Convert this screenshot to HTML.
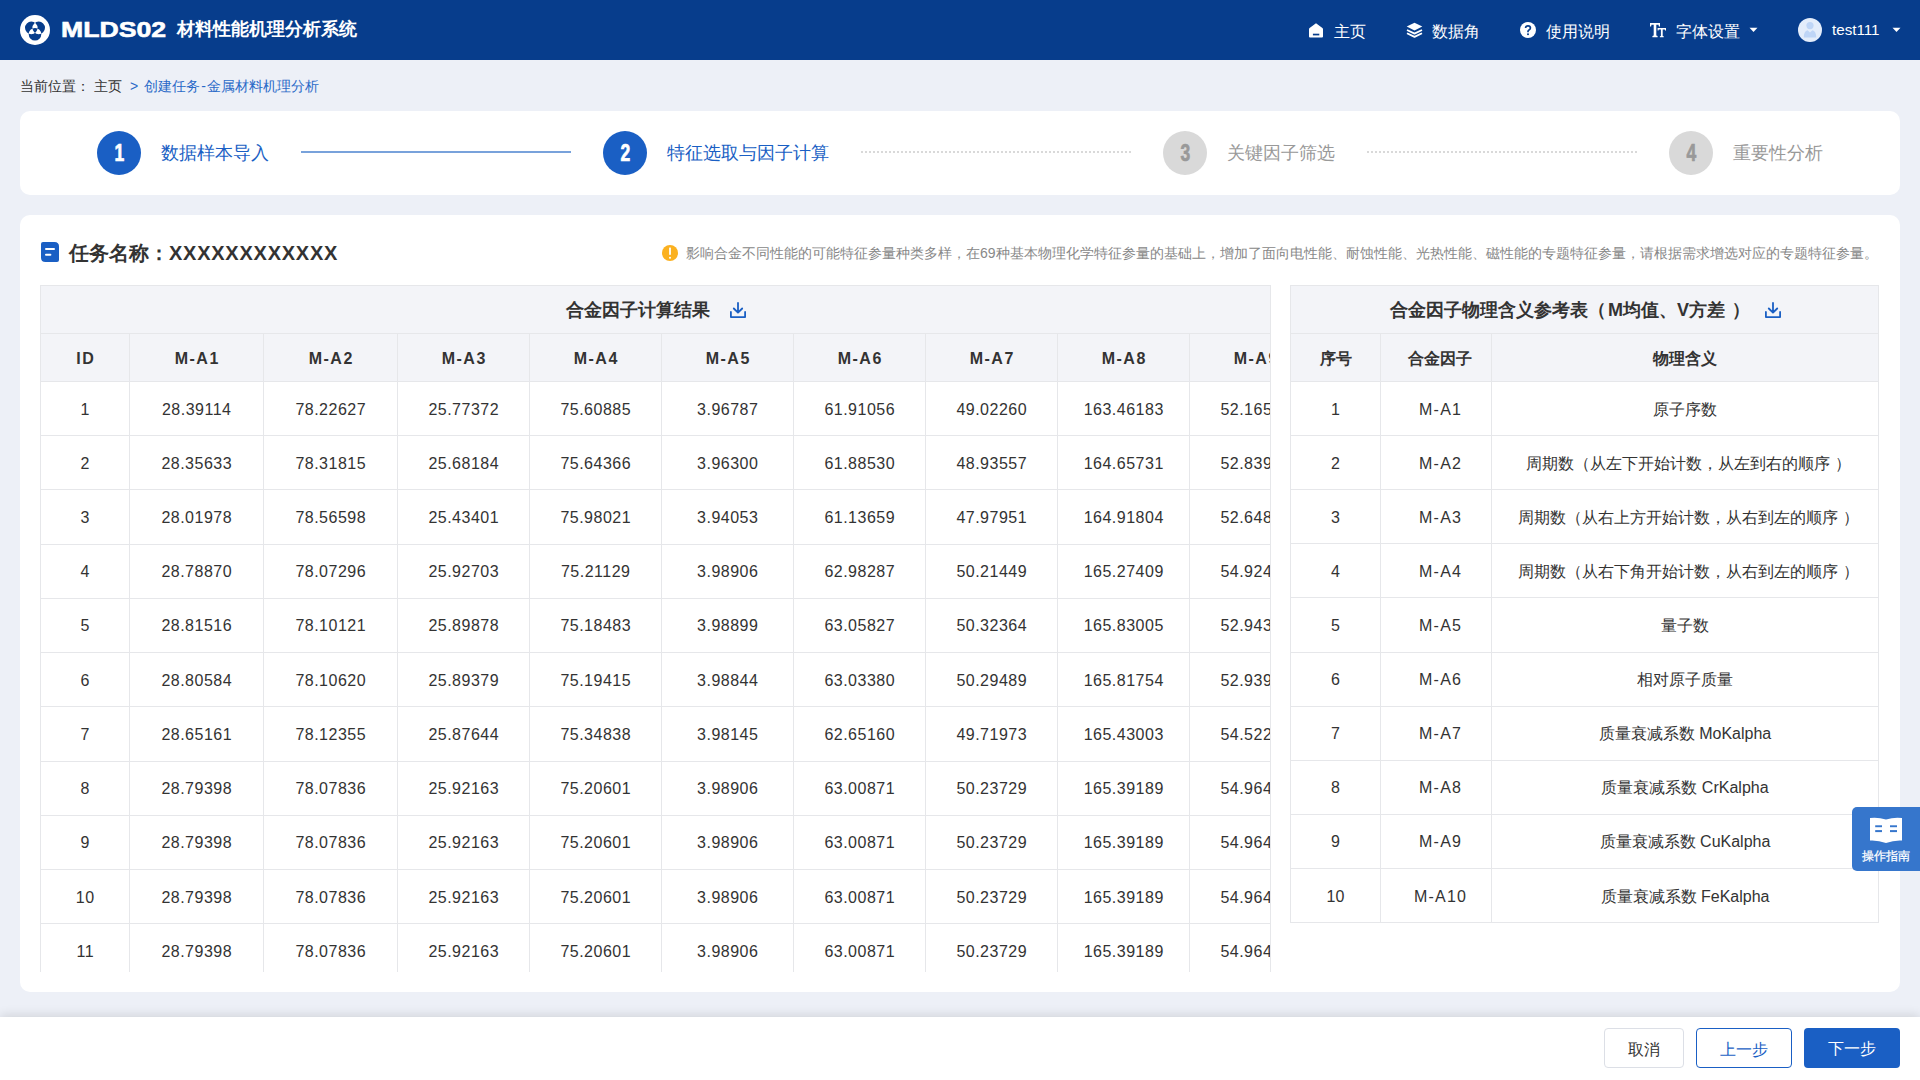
<!DOCTYPE html>
<html><head><meta charset="utf-8">
<style>
*{box-sizing:border-box;margin:0;padding:0}
html,body{width:1920px;height:1080px;overflow:hidden}
body{font-family:"Liberation Sans",sans-serif;background:#edf0f7;position:relative;color:#333}
.abs{position:absolute}
#hdr{left:0;top:0;width:1920px;height:60px;background:#073d8c}
.brand1{left:61px;top:16px;font-size:22px;line-height:28px;font-weight:bold;color:#fff;transform:scaleX(1.21);transform-origin:0 0;-webkit-text-stroke:0.6px #fff}
.brand2{left:177px;top:17px;font-size:18px;font-weight:bold;color:#fff}
.nav{top:21px;font-size:16px;color:#fff;line-height:22px;white-space:nowrap}
.crumb{top:76px;font-size:14px;line-height:20px;color:#333;white-space:nowrap}
.crumb.lnk{color:#2a6ac8}
.card{background:#fff;border-radius:10px}
.step-c{width:44px;height:44px;border-radius:50%;top:131px;color:#fff;font-size:23px;font-weight:bold;text-align:center;line-height:44px}
.step-c span{display:inline-block;transform:scaleX(0.76);-webkit-text-stroke:0.7px currentColor}
.step-t{top:140px;font-size:18px;line-height:26px;white-space:nowrap}
table{border-collapse:collapse;table-layout:fixed}
td,th{border:1px solid #e6e7ea;text-align:center;font-size:16px;line-height:22px;color:#333;white-space:nowrap;overflow:hidden;padding:2px 0 0 0}
th{background:#f3f4f8;font-weight:bold;height:48px}
#ltab th{letter-spacing:1.5px;text-indent:1.5px}
#ltab td{letter-spacing:0.5px;text-indent:0.5px}
#rtab td.m{letter-spacing:1.2px;text-indent:1.2px;padding-left:8px}
#rtab td{height:54.12px}
td{height:54.23px;font-weight:normal}
.ttl{background:#f3f4f8;border:1px solid #e6e7ea;border-bottom:none;display:flex;justify-content:center;align-items:center;font-size:18px;font-weight:bold;color:#333;padding-top:1px}
.ttl .tt{line-height:24px}
.btn{top:1028px;height:40px;border-radius:4px;font-size:16px;text-align:center;line-height:22px;padding-top:10px}
</style></head><body>
<div id="hdr" class="abs">
  <svg class="abs" style="left:20px;top:15px" width="30" height="30" viewBox="0 0 30 30">
    <circle cx="15" cy="15" r="15" fill="#fff"/>
    <path fill="#073d8c" fill-rule="evenodd" d="M5 12.85a6.3 6.3 0 1 0 12.6 0a6.3 6.3 0 1 0 -12.6 0Z M12.4 12.85a6.3 6.3 0 1 0 12.6 0a6.3 6.3 0 1 0 -12.6 0Z M8.7 19.3a6.3 6.3 0 1 0 12.6 0a6.3 6.3 0 1 0 -12.6 0Z"/>
  </svg>
  <div class="abs brand1">MLDS02</div>
  <div class="abs brand2">材料性能机理分析系统</div>
  <svg class="abs" style="left:1309px;top:23px" width="14" height="15" viewBox="0 0 14 15">
    <path fill="#fff" d="M7 0.3 L13.4 5 Q14 5.4 14 6.2 L14 13.6 Q14 14.6 13 14.6 L1 14.6 Q0 14.6 0 13.6 L0 6.2 Q0 5.4 0.6 5 Z"/>
    <rect x="3.9" y="10.7" width="6.4" height="1.7" fill="#073d8c"/>
  </svg>
  <div class="abs nav" style="left:1334px">主页</div>
  <svg class="abs" style="left:1406px;top:22px" width="17" height="16" viewBox="0 0 17 16">
    <path fill="#fff" d="M8.5 0.8 L16.3 4.6 L8.5 8.4 L0.7 4.6 Z"/>
    <path fill="none" stroke="#fff" stroke-width="1.8" stroke-linejoin="round" d="M1 8 L8.5 11.6 L16 8 M1 11.3 L8.5 14.9 L16 11.3"/>
  </svg>
  <div class="abs nav" style="left:1432px">数据角</div>
  <svg class="abs" style="left:1520px;top:22px" width="16" height="16" viewBox="0 0 16 16">
    <circle cx="8" cy="8" r="8" fill="#fff"/>
    <path fill="none" stroke="#073d8c" stroke-width="1.7" d="M5.6 6.1 Q5.6 3.8 8 3.8 Q10.4 3.8 10.4 5.9 Q10.4 7.2 9 7.9 Q8 8.4 8 9.6 L8 10.2"/>
    <rect x="7.1" y="11.4" width="1.8" height="1.7" fill="#073d8c"/>
  </svg>
  <div class="abs nav" style="left:1546px">使用说明</div>
  <svg class="abs" style="left:1650px;top:23px" width="17" height="15" viewBox="0 0 17 15">
    <path fill="#fff" d="M0 0 L10 0 L10 3.6 L8.9 3.6 L8.5 1.8 L6.3 1.8 L6.3 12.6 L7.6 13.1 L7.6 14.2 L2.4 14.2 L2.4 13.1 L3.7 12.6 L3.7 1.8 L1.5 1.8 L1.1 3.6 L0 3.6 Z"/>
    <path fill="#fff" d="M7.6 5 L16 5 L16 7.6 L15.1 7.6 L14.8 6.4 L12.7 6.4 L12.7 12.9 L13.7 13.3 L13.7 14.2 L9.9 14.2 L9.9 13.3 L10.9 12.9 L10.9 6.4 L8.8 6.4 L8.5 7.6 L7.6 7.6 Z"/>
  </svg>
  <div class="abs nav" style="left:1676px">字体设置</div>
  <svg class="abs" style="left:1749px;top:27px" width="9" height="6" viewBox="0 0 9 6"><path fill="#fff" d="M0.5 0.8 L8.5 0.8 L4.5 5 Z"/></svg>
  <svg class="abs" style="left:1798px;top:18px" width="24" height="24" viewBox="0 0 24 24">
    <circle cx="12" cy="12" r="12" fill="#e3edfb"/>
    <circle cx="12" cy="7.6" r="3.6" fill="#bed5f6"/>
    <path fill="#bed5f6" d="M5.8 19.6 Q5.8 13 9.6 12.2 L12 14.6 L14.4 12.2 Q18.2 13 18.2 19.6 Z"/>
  </svg>
  <div class="abs nav" style="left:1832px;top:19px;font-size:15.2px">test111</div>
  <svg class="abs" style="left:1892px;top:27px" width="9" height="6" viewBox="0 0 9 6"><path fill="#fff" d="M0.5 0.8 L8.5 0.8 L4.5 5 Z"/></svg>
</div>
<div class="abs crumb" style="left:20px">当前位置： 主页</div><div class="abs crumb lnk" style="left:130px">&gt;</div><div class="abs crumb lnk" style="left:144px">创建任务<span style="margin:0 1.3px">-</span>金属材料机理分析</div>

<div class="abs card" style="left:20px;top:111px;width:1880px;height:84px"></div>
<div class="abs step-c" style="left:97px;background:#1a5fc4"><span>1</span></div>
<div class="abs step-t" style="left:161px;color:#1a5fc4">数据样本导入</div>
<div class="abs" style="left:301px;top:151px;width:270px;height:2px;background:#78a2db"></div>
<div class="abs step-c" style="left:603px;background:#1a5fc4"><span>2</span></div>
<div class="abs step-t" style="left:667px;color:#1a5fc4">特征选取与因子计算</div>
<div class="abs" style="left:861px;top:151px;width:270px;height:0;border-top:2px dotted #d9d9d9"></div>
<div class="abs step-c" style="left:1163px;background:#d9d9d9;color:#999"><span>3</span></div>
<div class="abs step-t" style="left:1227px;color:#999">关键因子筛选</div>
<div class="abs" style="left:1367px;top:151px;width:270px;height:0;border-top:2px dotted #d9d9d9"></div>
<div class="abs step-c" style="left:1669px;background:#d9d9d9;color:#999"><span>4</span></div>
<div class="abs step-t" style="left:1733px;color:#999">重要性分析</div>

<div class="abs card" style="left:20px;top:215px;width:1880px;height:777px"></div>
<svg class="abs" style="left:41px;top:242px" width="18" height="20" viewBox="0 0 18 20"><path fill="#1a5fc4" d="M2 0 L13.5 0 Q18 0 18 4.5 L18 18 Q18 20 16 20 L4.5 20 Q0 20 0 15.5 L0 2 Q0 0 2 0 Z"/><rect x="4" y="6.1" width="10" height="2" rx="1" fill="#fff"/><rect x="4" y="11.8" width="6.4" height="2" rx="1" fill="#fff"/></svg>
<div class="abs" style="left:69px;top:239px;font-size:20px;font-weight:bold;line-height:28px;color:#333;white-space:nowrap">任务名称：<span style="letter-spacing:0.75px">XXXXXXXXXXXX</span></div>
<svg class="abs" style="left:662px;top:245px" width="16" height="16" viewBox="0 0 16 16"><circle cx="8" cy="8" r="8" fill="#fbb120"/><rect x="7.1" y="2.6" width="1.8" height="7.2" fill="#fff"/><rect x="7.1" y="11.9" width="1.8" height="1.7" fill="#fff"/></svg>
<div class="abs" style="left:686px;top:243px;font-size:14px;line-height:20px;color:#888;white-space:nowrap">影响合金不同性能的可能特征参量种类多样，在69种基本物理化学特征参量的基础上，增加了面向电性能、耐蚀性能、光热性能、磁性能的专题特征参量，请根据需求增选对应的专题特征参量。</div>

<div class="abs" style="left:40px;top:285px;width:1231px;height:687px;overflow:hidden" id="lt">
  <div class="ttl" style="width:1231px;height:48px"><span class="tt">合金因子计算结果</span><span class="dl" style="margin-left:20px"><svg width="16" height="16" viewBox="0 0 16 16" style="display:block"><path fill="none" stroke="#1a5fc4" stroke-width="1.8" stroke-linecap="round" stroke-linejoin="round" d="M8 1 L8 10.5 M3.8 6.5 L8 10.7 L12.2 6.5 M0.9 10 L0.9 15.1 L15.1 15.1 L15.1 10"/></svg></span></div>
  <table id="ltab" style="width:1281px">
<colgroup><col style="width:89px"><col style="width:134px"><col style="width:134px"><col style="width:132px"><col style="width:132px"><col style="width:132px"><col style="width:132px"><col style="width:132px"><col style="width:132px"><col style="width:132px"></colgroup>
<tr><th>ID</th><th>M-A1</th><th>M-A2</th><th>M-A3</th><th>M-A4</th><th>M-A5</th><th>M-A6</th><th>M-A7</th><th>M-A8</th><th>M-A9</th></tr>
<tr><td>1</td><td>28.39114</td><td>78.22627</td><td>25.77372</td><td>75.60885</td><td>3.96787</td><td>61.91056</td><td>49.02260</td><td>163.46183</td><td>52.16532</td></tr>
<tr><td>2</td><td>28.35633</td><td>78.31815</td><td>25.68184</td><td>75.64366</td><td>3.96300</td><td>61.88530</td><td>48.93557</td><td>164.65731</td><td>52.83915</td></tr>
<tr><td>3</td><td>28.01978</td><td>78.56598</td><td>25.43401</td><td>75.98021</td><td>3.94053</td><td>61.13659</td><td>47.97951</td><td>164.91804</td><td>52.64823</td></tr>
<tr><td>4</td><td>28.78870</td><td>78.07296</td><td>25.92703</td><td>75.21129</td><td>3.98906</td><td>62.98287</td><td>50.21449</td><td>165.27409</td><td>54.92451</td></tr>
<tr><td>5</td><td>28.81516</td><td>78.10121</td><td>25.89878</td><td>75.18483</td><td>3.98899</td><td>63.05827</td><td>50.32364</td><td>165.83005</td><td>52.94312</td></tr>
<tr><td>6</td><td>28.80584</td><td>78.10620</td><td>25.89379</td><td>75.19415</td><td>3.98844</td><td>63.03380</td><td>50.29489</td><td>165.81754</td><td>52.93914</td></tr>
<tr><td>7</td><td>28.65161</td><td>78.12355</td><td>25.87644</td><td>75.34838</td><td>3.98145</td><td>62.65160</td><td>49.71973</td><td>165.43003</td><td>54.52218</td></tr>
<tr><td>8</td><td>28.79398</td><td>78.07836</td><td>25.92163</td><td>75.20601</td><td>3.98906</td><td>63.00871</td><td>50.23729</td><td>165.39189</td><td>54.96417</td></tr>
<tr><td>9</td><td>28.79398</td><td>78.07836</td><td>25.92163</td><td>75.20601</td><td>3.98906</td><td>63.00871</td><td>50.23729</td><td>165.39189</td><td>54.96417</td></tr>
<tr><td>10</td><td>28.79398</td><td>78.07836</td><td>25.92163</td><td>75.20601</td><td>3.98906</td><td>63.00871</td><td>50.23729</td><td>165.39189</td><td>54.96417</td></tr>
<tr><td>11</td><td>28.79398</td><td>78.07836</td><td>25.92163</td><td>75.20601</td><td>3.98906</td><td>63.00871</td><td>50.23729</td><td>165.39189</td><td>54.96417</td></tr>
</table>
</div>

<div class="abs" style="left:1270px;top:285px;width:1px;height:687px;background:#e6e7ea"></div>
<div class="abs" style="left:1290px;top:285px;width:589px" id="rt">
  <div class="ttl" style="width:589px;height:48px;padding-left:2px"><span class="tt">合金因子物理含义参考表（<span style="margin-left:2px">M均值、V方差</span><span style="margin-left:7px">）</span></span><span class="dl" style="margin-left:15px"><svg width="16" height="16" viewBox="0 0 16 16" style="display:block"><path fill="none" stroke="#1a5fc4" stroke-width="1.8" stroke-linecap="round" stroke-linejoin="round" d="M8 1 L8 10.5 M3.8 6.5 L8 10.7 L12.2 6.5 M0.9 10 L0.9 15.1 L15.1 15.1 L15.1 10"/></svg></span></div>
  <table id="rtab" style="width:588px">
<colgroup><col style="width:90px"><col style="width:111px"><col style="width:387px"></colgroup>
<tr><th>序号</th><th style="padding-left:8px">合金因子</th><th>物理含义</th></tr>
<tr><td>1</td><td class="m">M-A1</td><td>原子序数</td></tr>
<tr><td>2</td><td class="m">M-A2</td><td style="padding-left:6px">周期数（从左下开始计数，从左到右的顺序<span style="margin-left:5px">）</span></td></tr>
<tr><td>3</td><td class="m">M-A3</td><td style="padding-left:6px">周期数（从右上方开始计数，从右到左的顺序<span style="margin-left:5px">）</span></td></tr>
<tr><td>4</td><td class="m">M-A4</td><td style="padding-left:6px">周期数（从右下角开始计数，从右到左的顺序<span style="margin-left:5px">）</span></td></tr>
<tr><td>5</td><td class="m">M-A5</td><td>量子数</td></tr>
<tr><td>6</td><td class="m">M-A6</td><td>相对原子质量</td></tr>
<tr><td>7</td><td class="m">M-A7</td><td>质量衰减系数 MoKalpha</td></tr>
<tr><td>8</td><td class="m">M-A8</td><td>质量衰减系数 CrKalpha</td></tr>
<tr><td>9</td><td class="m">M-A9</td><td>质量衰减系数 CuKalpha</td></tr>
<tr><td>10</td><td class="m">M-A10</td><td>质量衰减系数 FeKalpha</td></tr>
</table>
</div>

<div class="abs" style="left:0;top:1017px;width:1920px;height:63px;background:#fff;box-shadow:0 -2px 10px rgba(0,0,0,0.12)"></div>
<div class="abs btn" style="left:1604px;width:80px;border:1px solid #dcdfe6;color:#333">取消</div>
<div class="abs btn" style="left:1696px;width:96px;border:1px solid #1a5fc4;color:#1a5fc4">上一步</div>
<div class="abs btn" style="left:1804px;width:96px;background:#1a5fc4;color:#fff">下一步</div>

<div class="abs" style="left:1852px;top:807px;width:68px;height:64px;background:#3676cc;border-radius:5px 0 0 5px"></div>
<svg class="abs" style="left:1870px;top:817px" width="32" height="26" viewBox="0 0 32 26">
  <path fill="#fff" d="M0 1 Q8 0 16 2.5 Q24 0 32 1 L32 23.5 Q24 23 16 26 Q8 23 0 23.5 Z"/>
  <rect x="5.2" y="8.3" width="6.8" height="1.9" fill="#3676cc"/><rect x="5.2" y="13.1" width="6.8" height="2" fill="#3676cc"/>
  <rect x="20" y="8.3" width="7" height="1.9" fill="#3676cc"/><rect x="20" y="13.1" width="7" height="2" fill="#3676cc"/>
</svg>
<div class="abs" style="left:1852px;top:848px;width:68px;font-size:12px;line-height:16px;color:#fff;text-align:center;-webkit-text-stroke:0.25px #fff">操作指南</div>
</body></html>
